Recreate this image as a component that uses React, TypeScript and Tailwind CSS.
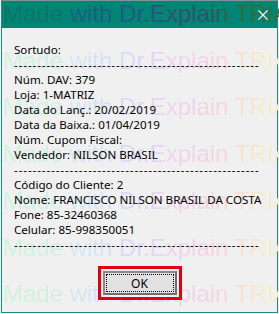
const LINES: string[] = [
  'Sortudo:',
  '-',
  'Núm. DAV: 379',
  'Loja: 1-MATRIZ',
  'Data do Lanç.: 20/02/2019',
  'Data da Baixa.: 01/04/2019',
  'Núm. Cupom Fiscal:',
  'Vendedor: NILSON BRASIL',
  '-',
  'Código do Cliente: 2',
  'Nome: FRANCISCO NILSON BRASIL DA COSTA',
  'Fone: 85-32460368',
  'Celular: 85-998350051',
  '-',
];

const DASHES = '-'.repeat(53);
const WATERMARK = 'Made with Dr.Explain TRIAL';

export default function App() {
  return (
    <div className="relative w-[279px] h-[314px] bg-[#f0f0f0] overflow-hidden">
      <div className="ml-[1px] w-[277px] h-[313px] flex flex-col border border-[#1f8a7d] border-t-[#7f9794]">
        {/* title bar */}
        <div className="h-[27px] shrink-0 bg-[#018574] flex justify-end items-center pr-[9px]">
          <svg className="relative z-10" width="10" height="10" viewBox="0 0 10 10">
            <path d="M0.5 0.5L9.5 9.5M9.5 0.5L0.5 9.5" stroke="#ffffff" strokeWidth="1.1" />
          </svg>
        </div>
        {/* client area */}
        <div className="flex-1 bg-[#f0f0f0]">
          <div className="relative z-10 pt-[13.5px] pl-[12px] text-[11.6px] leading-[15px] text-black font-['Noto_Sans',sans-serif]">
            {LINES.map((l, i) => (
              <div key={i} className="whitespace-nowrap">
                {l === '-' ? <span className="tracking-[0.9px]">{DASHES}</span> : l}
              </div>
            ))}
            <div className="flex justify-center mt-[14.5px] pr-[12px]">
              <div className="w-[84px] h-[34px] border-[3px] border-[#e0000f] bg-[#f0f0f0] p-[2px]">
                <button className="w-full h-full border-2 border-[#6f6f6f] border-t-[#8a8a8a] border-l-[#8a8a8a] bg-[#e1e1e1] p-[1px]">
                  <div className="w-full h-full border border-dotted border-black flex items-center justify-center text-[12px] text-black">
                    OK
                  </div>
                </button>
              </div>
            </div>
          </div>
        </div>
      </div>
      {/* watermark */}
      <div className="absolute inset-0 pointer-events-none font-['Liberation_Sans',Arial,sans-serif] text-[24px] leading-[24px]">
        <div className="absolute left-0 top-[2px] w-[279px] pl-[3px] whitespace-nowrap bg-[linear-gradient(90deg,#0c7565_0px,#0f7468_55px,#1b5d84_80px,#255785_135px,#34506f_175px,#3a4d68_210px,#34693f_235px,#3d6a3a_279px)] bg-clip-text text-transparent">
          {WATERMARK}
        </div>
        {[48.7, 95.4, 142, 188.8, 235.5, 282.2].map(t => (
          <div
            key={t}
            style={{ top: t }}
            className="absolute left-0 w-[279px] pl-[3px] whitespace-nowrap bg-[linear-gradient(90deg,#cff4da_0px,#d0f0e4_50px,#d2e6f3_80px,#d4e0f5_110px,#ddd5f5_140px,#edd3f0_170px,#f5d2de_215px,#f7e0d0_240px,#f4eccc_265px,#f0f1ca_279px)] bg-clip-text text-transparent"
          >
            {WATERMARK}
          </div>
        ))}
      </div>
    </div>
  );
}
